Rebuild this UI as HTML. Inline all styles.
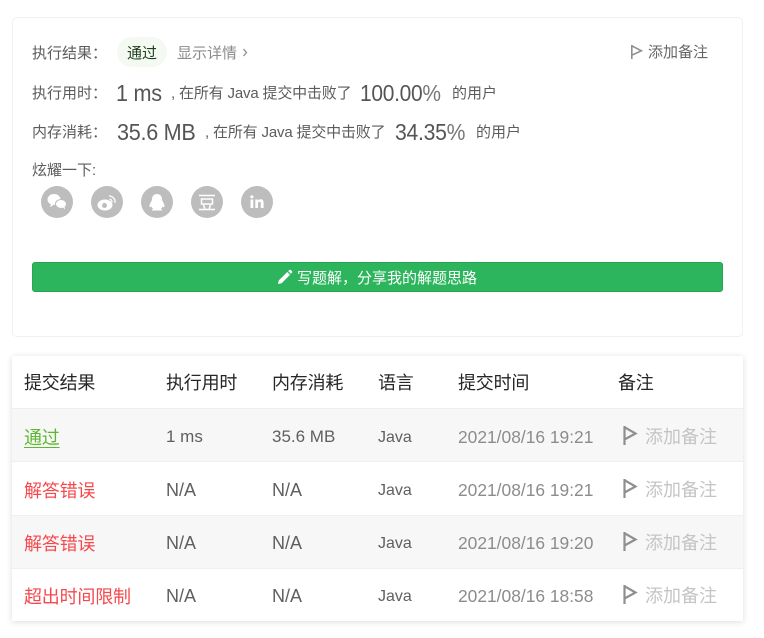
<!DOCTYPE html>
<html lang="zh">
<head>
<meta charset="utf-8">
<title>提交结果</title>
<style>
html,body{margin:0;padding:0;background:#fff}
body{width:764px;height:638px;position:relative;overflow:hidden;font-family:"Liberation Sans","Noto Sans CJK SC",sans-serif;color:#595959}
.t{position:absolute;white-space:nowrap;line-height:20px}
.s{font-size:15px;color:#5c5c5c}
.big{font-size:23px;color:#555;line-height:30px;letter-spacing:-.3px;transform-origin:0 50%}
.card{position:absolute;left:12px;top:17px;width:729px;height:318px;border:1px solid #f0f0f0;border-radius:5px;background:#fff}
.pill{position:absolute;left:117px;top:37px;width:50px;height:30px;border-radius:15px;background:#f4f9f2}
.btn{position:absolute;left:32px;top:262px;width:689px;height:28px;border:1px solid #28a452;border-radius:3px;background:#2db55d}
.btnt{color:#fff;font-size:15px}
.soc{position:absolute;top:186px;width:32px;height:32px;border-radius:50%;background:#bdbdbd}
.soc svg{display:block}
.table{position:absolute;left:12px;top:356px;width:731px;height:265px;background:#fff;box-shadow:0 1px 6px rgba(0,0,0,.14)}
.row{position:absolute;left:0;width:731px;border-top:1px solid #efefef;box-sizing:border-box}
.h{font-size:18px;letter-spacing:-.2px;color:#262626}
.c{font-size:18px;color:#5f5f5f}
.l{font-size:17px;color:#5f5f5f}
.j{font-size:16px;color:#5f5f5f}
.d{font-size:17.4px;color:#8c8c8c}
.g{font-size:18px;letter-spacing:-.2px;color:#5cb82e;text-decoration:underline;text-underline-offset:3px}
.r{font-size:18px;letter-spacing:-.2px;color:#f5484d}
.n{font-size:18px;color:#c4c4c4}
svg{position:absolute}
</style>
</head>
<body>
<div class="card"></div>
<div class="t s" style="left:32px;top:44px">执行结果：</div>
<div class="pill"></div>
<div class="t" style="left:127px;top:44px;font-size:15px;color:#1f3d1f">通过</div>
<div class="t" style="left:177px;top:44px;font-size:15px;color:#8c8c8c">显示详情</div>
<svg style="left:241px;top:47px" width="8" height="12" viewBox="0 0 8 12"><path d="M2.500 2l3 3.500-3 3.500" fill="none" stroke="#8c8c8c" stroke-width="1.300"/></svg>
<svg style="left:630px;top:44px" width="13" height="17" viewBox="0 0 13 17"><path d="M1.800 1v14M1.800 1.800l9.500 5-9.500 4.400" fill="none" stroke="#8f8f8f" stroke-width="1.600"/></svg>
<div class="t s" style="left:648px;top:43px;color:#666">添加备注</div>

<div class="t s" style="left:32px;top:84px">执行用时：</div>
<div class="t big" style="left:116px;top:78px;transform:scaleX(.94)">1 ms</div>
<div class="t s" style="left:171px;top:84px;letter-spacing:-.17px">, 在所有 Java 提交中击败了</div>
<div class="t big" style="left:360px;top:78px;transform:scaleX(.91)">100.00<span style="color:#777">%</span></div>
<div class="t s" style="left:452px;top:84px">的用户</div>

<div class="t s" style="left:32px;top:123px">内存消耗：</div>
<div class="t big" style="left:117px;top:117px;transform:scaleX(.94)">35.6 MB</div>
<div class="t s" style="left:205px;top:123px;letter-spacing:-.17px">, 在所有 Java 提交中击败了</div>
<div class="t big" style="left:395px;top:117px;transform:scaleX(.92)">34.35<span style="color:#777">%</span></div>
<div class="t s" style="left:476px;top:123px">的用户</div>

<div class="t s" style="left:32px;top:161px">炫耀一下:</div>
<div class="soc" style="left:41px"><svg width="32" height="32" viewBox="0 0 32 32"><ellipse cx="13" cy="13.500" rx="6.500" ry="5.500" fill="#fff"/><ellipse cx="20" cy="18" rx="5.500" ry="4.500" fill="#fff" stroke="#bdbdbd" stroke-width="1"/><path d="M10 18l-1 3 3-1.500zM22 21.500l2 2-.5-3z" fill="#fff"/></svg></div>
<div class="soc" style="left:91px"><svg width="32" height="32" viewBox="0 0 32 32"><ellipse cx="14" cy="19" rx="7.500" ry="5.500" fill="#fff"/><circle cx="13.500" cy="19.500" r="2.500" fill="#bdbdbd"/><path d="M18 10a6 6 0 0 1 6 7M18.500 13a3 3 0 0 1 2.500 3.500" fill="none" stroke="#fff" stroke-width="1.300"/></svg></div>
<div class="soc" style="left:141px"><svg width="32" height="32" viewBox="0 0 32 32"><path d="M16 8c-3.500 0-5 2.500-5 5.500 0 1.500-2.500 4-2.500 6.500 0 1.500 1 1.500 2 .5.300 1 1 1.800 1.800 2.300-1 .4-1.800 1-1 1.700h9.400c.8-.7 0-1.300-1-1.700.8-.5 1.500-1.300 1.800-2.300 1 1 2 1 2-.5 0-2.500-2.500-5-2.500-6.500C21 10.500 19.500 8 16 8z" fill="#fff"/></svg></div>
<div class="soc" style="left:191px"><svg width="32" height="32" viewBox="0 0 32 32"><path d="M8 9.500h16M10.500 13h11v5h-11zM8 23.500h16M12.500 19l1.500 4.500M19.500 19L18 23.500" fill="none" stroke="#fff" stroke-width="1.500"/></svg></div>
<div class="soc" style="left:241px"><svg width="32" height="32" viewBox="0 0 32 32"><path d="M9.500 13.500h2.800V22H9.500zM14.300 13.500h2.600v1.200c.6-.9 1.500-1.400 2.700-1.400 2 0 3 1.300 3 3.500V22h-2.800v-4.700c0-1-.4-1.600-1.300-1.600-.9 0-1.500.6-1.500 1.700V22h-2.700z" fill="#fff"/><circle cx="10.900" cy="10.800" r="1.600" fill="#fff"/></svg></div>

<div class="btn"></div>
<svg style="left:277px;top:269px" width="16" height="16" viewBox="0 0 16 16"><path d="M1 15l.8-3.600L10.300 3l2.800 2.800-8.500 8.400zM11.200 2.100l1.200-1.100c.4-.4 1-.4 1.400 0l1.200 1.200c.4.400.4 1 0 1.400L13.900 4.800z" fill="#fff"/></svg>
<div class="t btnt" style="left:297px;top:269px">写题解，分享我的解题思路</div>

<div class="table">
  <div class="row" style="top:52px;height:54px;background:#f7f7f7"></div>
  <div class="row" style="top:105px;height:54px;background:#fff"></div>
  <div class="row" style="top:159px;height:54px;background:#f7f7f7"></div>
  <div class="row" style="top:212px;height:53px;background:#fff"></div>
</div>

<div class="t h" style="left:24px;top:373px">提交结果</div>
<div class="t h" style="left:166px;top:373px">执行用时</div>
<div class="t h" style="left:272px;top:373px">内存消耗</div>
<div class="t h" style="left:378px;top:373px">语言</div>
<div class="t h" style="left:458px;top:373px">提交时间</div>
<div class="t h" style="left:618px;top:373px">备注</div>

<div class="t g" style="left:24px;top:428px">通过</div>
<div class="t l" style="left:166px;top:427px">1 ms</div>
<div class="t l" style="left:272px;top:427px">35.6 MB</div>
<div class="t j" style="left:378px;top:428px">Java</div>
<div class="t d" style="left:458px;top:427px">2021/08/16 19:21</div>
<svg style="left:623px;top:426px" width="16" height="20" viewBox="0 0 16 20"><path d="M1.500 0v19M1.500 1.200l11 6.300-11 6" fill="none" stroke="#8f8f8f" stroke-width="2.200"/></svg>
<div class="t n" style="left:645px;top:427px">添加备注</div>

<div class="t r" style="left:24px;top:481px">解答错误</div>
<div class="t c" style="left:166px;top:480px">N/A</div>
<div class="t c" style="left:272px;top:480px">N/A</div>
<div class="t j" style="left:378px;top:481px">Java</div>
<div class="t d" style="left:458px;top:480px">2021/08/16 19:21</div>
<svg style="left:623px;top:479px" width="16" height="20" viewBox="0 0 16 20"><path d="M1.500 0v19M1.500 1.200l11 6.300-11 6" fill="none" stroke="#8f8f8f" stroke-width="2.200"/></svg>
<div class="t n" style="left:645px;top:480px">添加备注</div>

<div class="t r" style="left:24px;top:534px">解答错误</div>
<div class="t c" style="left:166px;top:533px">N/A</div>
<div class="t c" style="left:272px;top:533px">N/A</div>
<div class="t j" style="left:378px;top:534px">Java</div>
<div class="t d" style="left:458px;top:533px">2021/08/16 19:20</div>
<svg style="left:623px;top:532px" width="16" height="20" viewBox="0 0 16 20"><path d="M1.500 0v19M1.500 1.200l11 6.300-11 6" fill="none" stroke="#8f8f8f" stroke-width="2.200"/></svg>
<div class="t n" style="left:645px;top:533px">添加备注</div>

<div class="t r" style="left:24px;top:587px">超出时间限制</div>
<div class="t c" style="left:166px;top:586px">N/A</div>
<div class="t c" style="left:272px;top:586px">N/A</div>
<div class="t j" style="left:378px;top:587px">Java</div>
<div class="t d" style="left:458px;top:586px">2021/08/16 18:58</div>
<svg style="left:623px;top:585px" width="16" height="20" viewBox="0 0 16 20"><path d="M1.500 0v19M1.500 1.200l11 6.300-11 6" fill="none" stroke="#8f8f8f" stroke-width="2.200"/></svg>
<div class="t n" style="left:645px;top:586px">添加备注</div>
</body>
</html>
